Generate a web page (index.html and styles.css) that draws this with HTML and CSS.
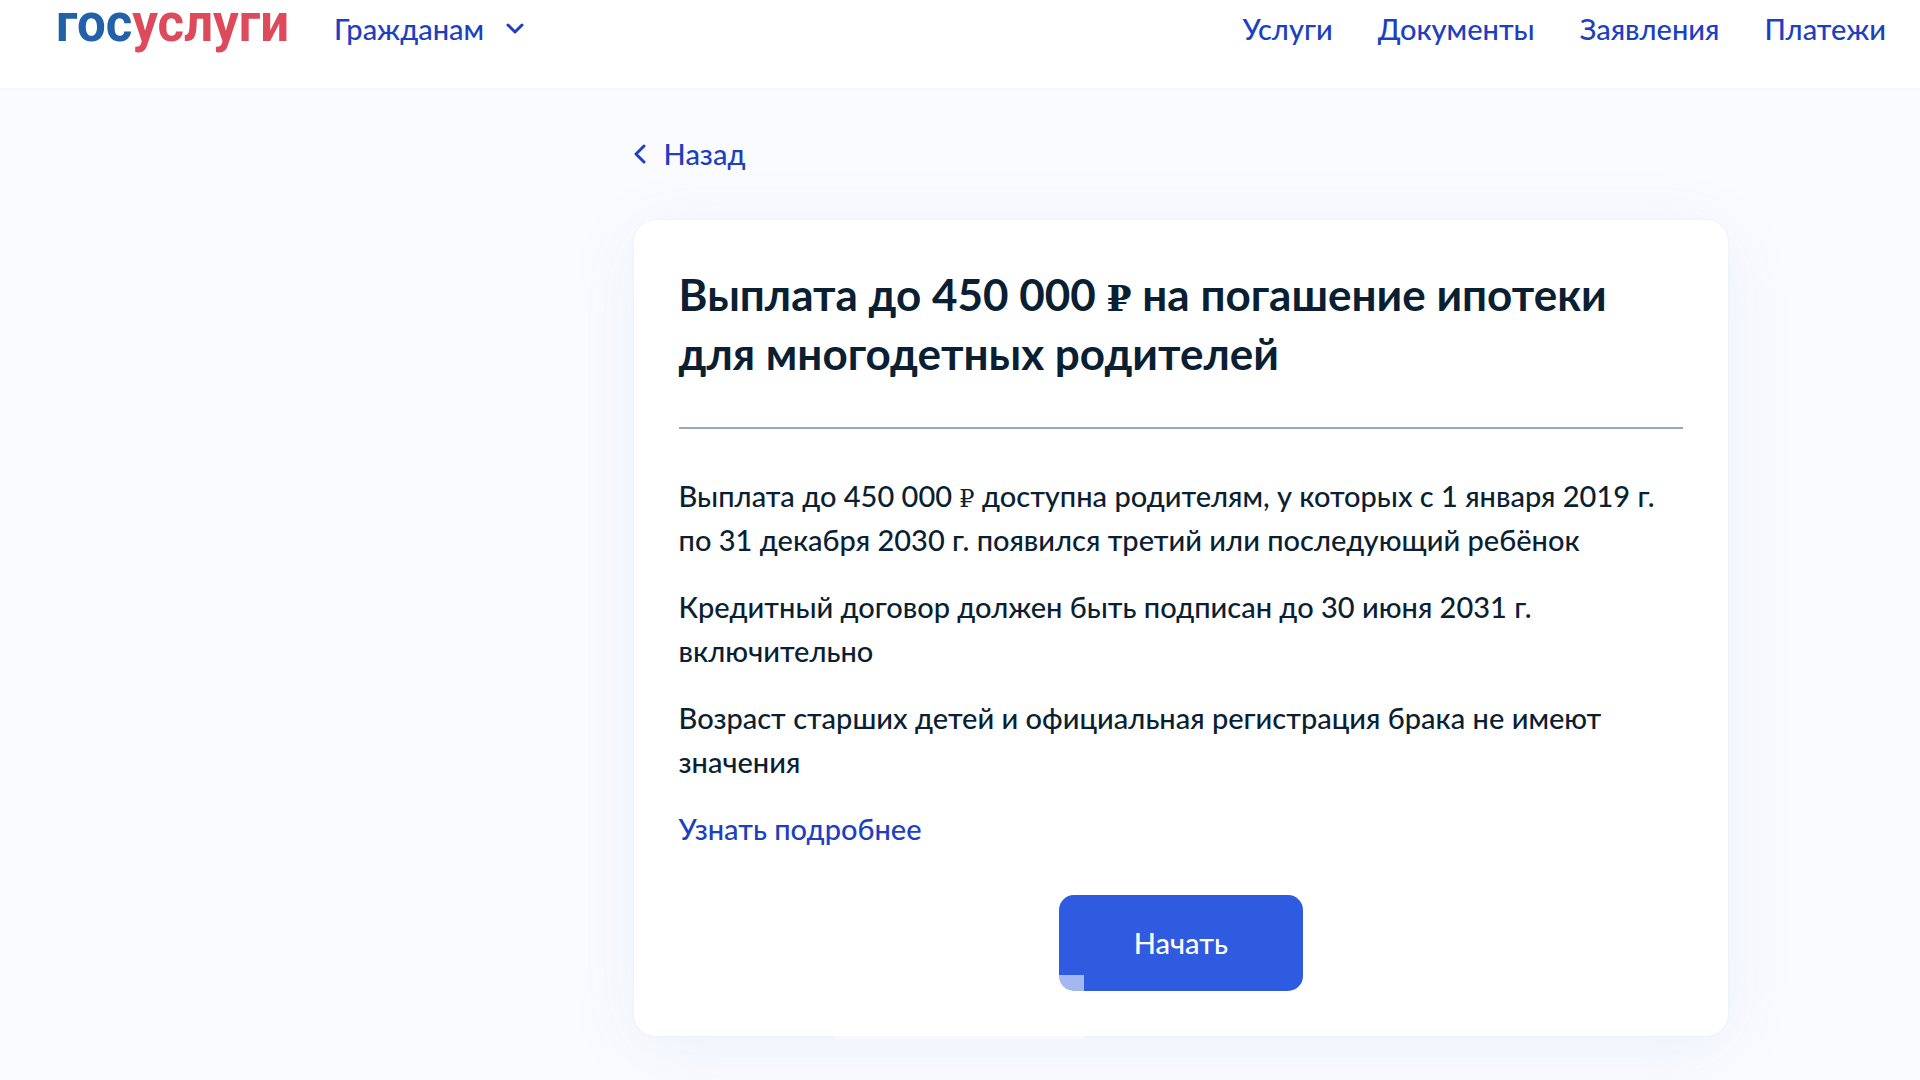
FILE: index.html
```html
<!DOCTYPE html>
<html lang="ru">
<head>
<meta charset="utf-8">
<meta name="viewport" content="width=device-width, initial-scale=1">
<title>Госуслуги</title>
<link rel="stylesheet" href="styles.css">
</head>
<body>
<header class="header">
  <a class="logo" href="#"><span class="logo-blue">гос</span><span class="logo-red">услуги</span></a>
  <button class="audience" type="button">Гражданам
    <svg class="chevron-down" viewBox="0 0 18 12" aria-hidden="true"><path d="M2 2l7 7 7-7"/></svg>
  </button>
  <nav class="nav">
    <a href="#">Услуги</a>
    <a href="#">Документы</a>
    <a href="#">Заявления</a>
    <a href="#">Платежи</a>
  </nav>
</header>
<main class="main">
  <a class="back" href="#">
    <svg class="chevron-left" viewBox="0 0 12 20" aria-hidden="true"><path d="M10 2L2 10l8 8"/></svg>
    Назад
  </a>
  <section class="card">
    <h1 class="title">Выплата до 450 000 <span class="rub">₽</span> на погашение ипотеки для многодетных родителей</h1>
    <div class="text">
      <p>Выплата до 450 000 <span class="rub">₽</span> доступна родителям, у которых с 1 января 2019 г. по 31 декабря 2030 г. появился третий или последующий ребёнок</p>
      <p>Кредитный договор должен быть подписан до 30 июня 2031 г. включительно</p>
      <p>Возраст старших детей и официальная регистрация брака не имеют значения</p>
      <a href="#">Узнать подробнее</a>
    </div>
    <button class="start" type="button">Начать</button>
    <span class="veil"></span>
  </section>
</main>
</body>
</html>
```
FILE: styles.css
```css
* { box-sizing: border-box; }

body {
  margin: 0;
  background: #fafbff;
  color: #0b1f33;
  font: 500 29px/44px Lato, sans-serif;
}

a { color: #1d3fc0; text-decoration: none; }

button { font: inherit; border: 0; cursor: pointer; }

svg { fill: none; stroke: currentColor; stroke-width: 3; stroke-linecap: round; stroke-linejoin: round; }

.header {
  display: flex;
  align-items: flex-start;
  padding: 7px 34px 37px 56px;
  background: #fff;
  border-bottom: 2px solid #f5f6fb;
}

.logo { font: bold 51px/34px Roboto, sans-serif; }
.logo-blue { color: #2260a8; }
.logo-red { color: #dd4a5c; }

.audience {
  display: flex;
  align-items: center;
  gap: 22px;
  margin-left: 45px;
  padding: 0;
  background: none;
  color: #1d3fc0;
}

.chevron-down { width: 18px; height: 12px; }

.nav { display: flex; gap: 45px; margin-left: auto; }

.main { padding: 41px 10% 44px 33%; }

.back { display: inline-flex; align-items: center; gap: 18px; }

.chevron-left { width: 12px; height: 20px; }

.card {
  position: relative;
  display: flex;
  flex-direction: column;
  margin-top: 44px;
  padding: 45px;
  border-radius: 22px;
  background: #fff;
  box-shadow: 0 0 3px rgba(60, 110, 180, 0.08), 0 12px 72px rgba(60, 120, 190, 0.08);
}

.title {
  margin: 0;
  padding-bottom: 44px;
  border-bottom: 2px solid #9aa6c8;
  font-size: 44px;
  line-height: 59px;
}

.rub { font-family: "DejaVu Serif", serif; font-size: 24px; line-height: 1; }
.title .rub { font-size: 36px; }

.text { display: flex; flex-direction: column; align-items: flex-start; gap: 23px; padding: 45px 0 44px; }
.text p { margin: 0; }

.start {
  align-self: center;
  padding: 26px 75px;
  border-radius: 15px;
  background: #2f5be0;
  color: #fff;
}

/* Translucent strip over the lower edge of the card */
.veil {
  position: absolute;
  left: 201px;
  bottom: -3px;
  width: 249px;
  height: 64px;
  background: rgba(255, 255, 255, 0.56);
  pointer-events: none;
}
```
